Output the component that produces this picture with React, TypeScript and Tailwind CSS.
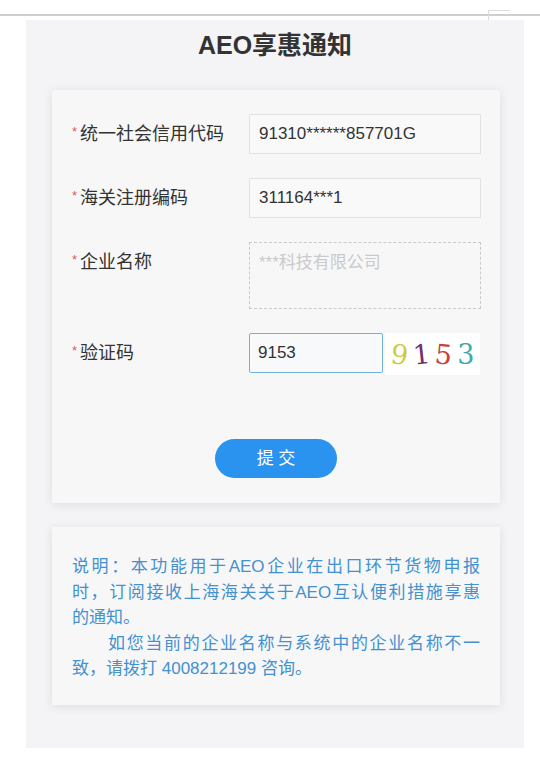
import React from "react";

function Label({ text }: { text: string }) {
  return (
    <div className="flex h-[40px] items-center text-[18px] text-[#333]">
      <span className="mr-[3px] -mt-[4px] text-[13px] text-[#e0575a]">*</span>
      <span>{text}</span>
    </div>
  );
}

export default function App() {
  return (
    <div className="relative h-[765px] w-[540px] overflow-hidden bg-white font-['Liberation_Sans','Noto_Sans_CJK_SC',sans-serif]">
      <div className="h-[14px]" />
      <div className="h-[2px] w-full bg-[#cfcfcf]" />
      <div className="absolute left-[488px] top-[10px] h-[10px] w-[22px] border-l border-t border-[#dcdcdc]" />
      <div className="ml-[26px] mt-[4px] flex h-[728px] w-[498px] flex-col bg-[#f4f4f6]">
        <div className="mt-[9px] h-[32px] text-center text-[25px] font-bold leading-[32px] text-[#333]">
          AEO享惠通知
        </div>
        <div className="ml-[26px] mr-[24px] mt-[29px] flex h-[413px] flex-col bg-[#f7f7f8] px-[20px] pt-[24px] shadow-[0_2px_10px_rgba(0,0,0,0.09)]">
          <div className="grid grid-cols-[177px_232px] gap-y-[24px]">
            <Label text="统一社会信用代码" />
            <div className="flex h-[40px] items-center border border-[#e2e2e4] bg-[#f9f9fa] px-[9px] text-[17px] text-[#333]">
              91310******857701G
            </div>
            <Label text="海关注册编码" />
            <div className="flex h-[40px] items-center border border-[#e2e2e4] bg-[#f9f9fa] px-[9px] text-[17px] text-[#333]">
              311164***1
            </div>
            <Label text="企业名称" />
            <div className="h-[67px] border border-dashed border-[#c9c9cb] px-[9px] pt-[8px] text-[17px] leading-[24px] text-[#cacaca]">
              ***科技有限公司
            </div>
            <Label text="验证码" />
            <div className="flex h-[42px] items-start gap-[2px]">
              <div className="flex h-[40px] w-[134px] items-center rounded-[2px] border-[1.5px] border-[#72b2d8] bg-[#f8f9fa] px-[8px] text-[17px] text-[#333]">
                9153
              </div>
              <div className="flex h-[42px] w-[95px] items-center justify-center gap-[5px] bg-white font-['DejaVu_Serif',serif] text-[27px] leading-none">
                <span className="rotate-[8deg] text-[#cccc44]">9</span>
                <span className="-rotate-[6deg] text-[#74306e]">1</span>
                <span className="rotate-[6deg] text-[#c8403c]">5</span>
                <span className="text-[#3fa9ab]">3</span>
              </div>
            </div>
          </div>
          <div className="mt-[64px] flex justify-center">
            <div className="flex h-[39px] w-[122px] items-center justify-center rounded-full bg-[#2a93ef] text-[17px] text-white">
              提 交
            </div>
          </div>
        </div>
        <div className="ml-[26px] mr-[24px] mt-[24px] h-[178px] bg-[#f7f7f8] px-[20px] pt-[27px] text-[17px] leading-[25.5px] text-[#4391cf] shadow-[0_2px_10px_rgba(0,0,0,0.09)]">
          <div className="text-justify [text-align-last:justify]">说明：本功能用于AEO企业在出口环节货物申报</div>
          <div className="text-justify [text-align-last:justify]">时，订阅接收上海海关关于AEO互认便利措施享惠</div>
          <div>的通知。</div>
          <div className="pl-[36px] text-justify [text-align-last:justify]">如您当前的企业名称与系统中的企业名称不一</div>
          <div>致，请拨打 4008212199 咨询。</div>
        </div>
      </div>
    </div>
  );
}
